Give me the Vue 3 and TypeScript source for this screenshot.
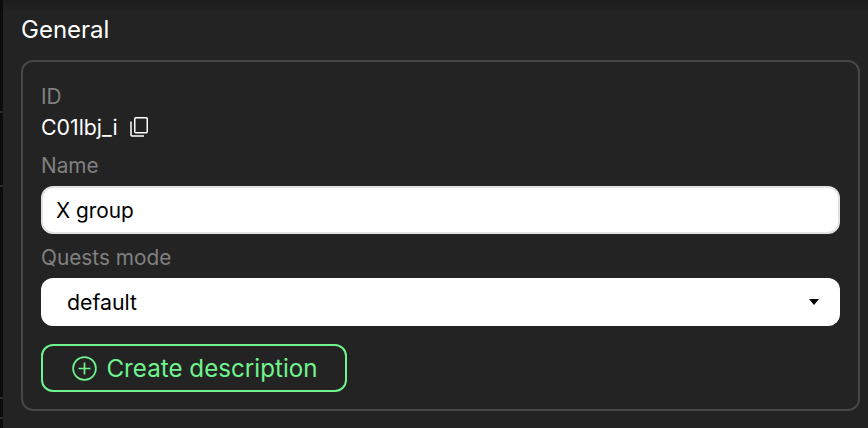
<script setup lang="ts">
const title: string = 'General'
</script>

<template>
  <div class="page">
    <div class="rail"></div>
    <main class="panel">
      <h2 class="title">{{ title }}</h2>
      <section class="card">
        <div class="label id-label">ID</div>
        <div class="id-row">
          <span>C01lbj_i</span>
          <svg class="copy" width="18" height="20" viewBox="0 0 18 20" fill="none" stroke="#fff" stroke-width="1.5">
            <rect x="4.75" y="0.75" width="12.5" height="15" rx="1" />
            <path d="M1 4.5V18c0 .6.4 1 1 1h12" />
          </svg>
        </div>
        <label class="label name-label">Name</label>
        <div class="input">X group</div>
        <label class="label mode-label">Quests mode</label>
        <div class="select">
          <span>default</span>
          <span class="caret"></span>
        </div>
        <button class="create" type="button">
          <svg width="25" height="25" viewBox="0 0 25 25" fill="none" stroke="#70f38e" stroke-width="1.7">
            <circle cx="12.5" cy="12.5" r="11.4" />
            <path d="M12.5 6.5v12M6.5 12.5h12" />
          </svg>
          <span>Create description</span>
        </button>
      </section>
    </main>
  </div>
</template>

<style>
html, body { margin: 0; background: #232323; }
</style>

<style scoped>
.page {
  display: flex;
  width: 868px;
  height: 428px;
  overflow: hidden;
  background: #232323;
  font-family: Inter, "Liberation Sans", sans-serif;
  color: #fff;
}
.rail {
  width: 3px;
  flex: none;
  background:
    linear-gradient(#2a2a2a, #2a2a2a) 0 111px / 3px 2px no-repeat,
    linear-gradient(#2a2a2a, #2a2a2a) 0 185px / 3px 2px no-repeat,
    linear-gradient(#2a2a2a, #2a2a2a) 0 397px / 3px 2px no-repeat,
    linear-gradient(#2a2a2a, #2a2a2a) 0 417px / 3px 2px no-repeat,
    #0c0c0c;
}
.panel {
  flex: 1;
  padding: 0 8px 0 18px;
  box-sizing: border-box;
  background: linear-gradient(#1c1c1c, #232323 12px);
}
.title {
  margin: 0;
  height: 60px;
  box-sizing: border-box;
  padding-top: 16px;
  font-size: 24px;
  line-height: 28px;
  font-weight: 400;
  letter-spacing: 0;
}
.card {
  height: 351px;
  box-sizing: border-box;
  border: 2px solid #474747;
  border-radius: 12px;
  padding: 22px 18px 0;
  display: flex;
  flex-direction: column;
  align-items: stretch;
}
.label { font-size: 20.8px; line-height: 26px; color: #808080; }
.id-row {
  display: flex;
  align-items: center;
  gap: 12px;
  height: 32px;
  box-sizing: border-box;
  padding-top: 2px;
  font-size: 21.3px;
  color: #fff;
}
.name-label { margin-top: 11px; }
.input, .select {
  height: 48px;
  box-sizing: border-box;
  background: #fff;
  border-radius: 12px;
  color: #000;
  font-size: 20.8px;
  display: flex;
  align-items: center;
}
.input { margin-top: 7px; padding-left: 13px; border: 2px solid #e2e2e2; }
.mode-label { margin-top: 11px; }
.select { margin-top: 7px; padding: 0 21px 0 26px; justify-content: space-between; font-size: 21.3px; }
.caret {
  width: 0;
  height: 0;
  border-left: 5.5px solid transparent;
  border-right: 5.5px solid transparent;
  border-top: 6px solid #000;
}
.create {
  margin-top: 18px;
  width: 306px;
  height: 48px;
  box-sizing: border-box;
  border: 2px solid #70f38e;
  border-radius: 12px;
  background: transparent;
  color: #70f38e;
  font-family: inherit;
  font-size: 24.2px;
  display: flex;
  align-items: center;
  justify-content: center;
  gap: 9px;
  padding: 0 0 0 2px;
}
</style>
